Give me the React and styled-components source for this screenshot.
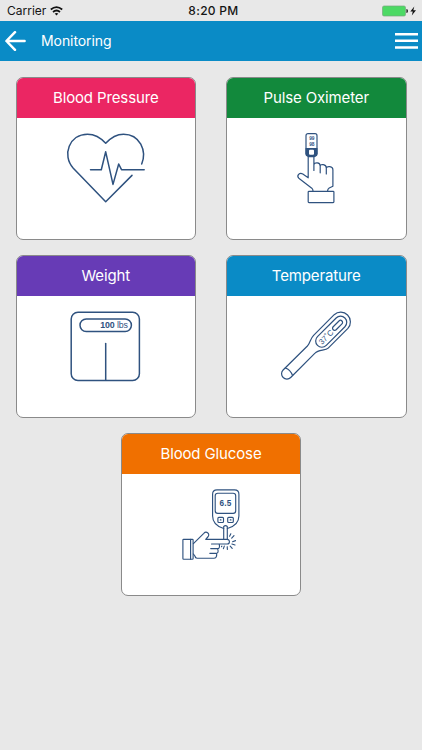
import React from "react";
import styled, { createGlobalStyle } from "styled-components";

const GlobalStyle = createGlobalStyle`
  * { box-sizing: border-box; }
  body { margin: 0; background: #e8e8e8; }
`;

const Screen = styled.div`
  width: 422px;
  height: 750px;
  overflow: hidden;
  background: #e8e8e8;
  font-family: Inter, "Liberation Sans", sans-serif;
`;

const StatusBar = styled.header`
  display: grid;
  grid-template-columns: 1fr auto 1fr;
  align-items: center;
  height: 21px;
  padding: 1px 4px 0 7px;
  color: #151515;
  font-size: 12px;
  line-height: 20px;
`;

const Carrier = styled.div`
  display: flex;
  align-items: center;
  gap: 4px;
`;

const Clock = styled.time`
  font-weight: 500;
  letter-spacing: 0.3px;
  padding-left: 2px;
`;

const Power = styled.div`
  display: flex;
  align-items: center;
  justify-content: flex-end;
`;

const NavBar = styled.nav`
  display: flex;
  align-items: center;
  height: 40px;
  padding: 0 4px 0 5px;
  background: #0a8bc6;
  color: #fff;
`;

const IconButton = styled.button`
  display: flex;
  padding: 0;
  border: 0;
  background: none;
  color: inherit;
`;

const PageTitle = styled.h1`
  flex: 1;
  margin: 0 0 0 15px;
  font-size: 14px;
  font-weight: 400;
  line-height: 20px;
  letter-spacing: -0.08px;
`;

const CardGrid = styled.main`
  display: flex;
  flex-wrap: wrap;
  justify-content: center;
  gap: 15px 30px;
  padding-top: 16px;
`;

const Card = styled.section`
  display: flex;
  flex-direction: column;
  align-items: center;
  width: 180.5px;
  height: 163px;
  overflow: hidden;
  border: 1px solid #8a8a8a;
  border-radius: 7px;
  background: #fff;
`;

const CardTitle = styled.h2`
  width: 100%;
  height: 40px;
  margin: 0 0 15px;
  background: ${(p) => p.$color};
  color: #fff;
  font-size: 15px;
  font-weight: 400;
  line-height: 40px;
  letter-spacing: -0.13px;
  text-align: center;
`;

const Drawing = styled.svg`
  display: block;
  flex: none;
  width: 80px;
  height: 72px;
  overflow: visible;
  fill: none;
  stroke: #2f527f;
  stroke-width: ${(p) => p.$line || 1.2};
  stroke-linecap: round;
  stroke-linejoin: round;

  text {
    fill: #2f527f;
    stroke: none;
    font-family: "Liberation Sans", sans-serif;
  }
`;

const Heart = () => (
  <Drawing viewBox="0 0 80 72" $line={1.5}>
    <path d="M75.7 31C81 18 74 1.2 57.5 1.2C49.5 1.2 44.5 5 39.7 10.3C35 5 29.5 1.2 21.5 1.2C3.5 1.2-4.5 22 7.3 35.2L39.7 68.8L66 42.4" />
    <path d="M24.5 36.7H35.3L39.7 18.8L47 51.4L52.7 31L55.5 36.7H78.2" />
  </Drawing>
);

const Oximeter = () => (
  <Drawing viewBox="0 0 80 72" $line={1.2}>
    <rect x="30" y=".7" width="11" height="22" rx="2" />
    <path d="M29.5 15H41.5V20.5Q40.5 24.2 37.8 24.3H33.2Q30.5 24.2 29.5 20.5Z" fill="#2f527f" stroke="none" />
    <rect x="33" y="16.8" width="5" height="5" rx="1" fill="#fff" stroke="none" />
    <text x="35.8" y="7.2" fontSize="4.8" fontWeight="700" textAnchor="middle">99</text>
    <text x="35.8" y="12.6" fontSize="4.8" fontWeight="700" textAnchor="middle">98</text>
    <path d="M32.2 24V44.8L26.8 41C23.5 39.2 20.3 42.6 22.8 45.2L35.8 55.2Q37 56.4 37 58M37.9 24V37.5M37.9 31.5C38.5 29.4 44.2 28.8 44.2 33V39.8M44.2 33C44.5 30.8 50.3 30.8 50.3 35V41M50.3 35C51 33 56.9 33 56.9 36.7V53.3L53.2 55Q51.6 56 51.6 58" />
    <rect x="32.2" y="58.3" width="25.7" height="11.3" rx=".8" />
  </Drawing>
);

const Scale = () => (
  <Drawing viewBox="0 0 80 72" $line={1.5}>
    <rect x="5.2" y="1.2" width="68.2" height="68.3" rx="6.8" />
    <rect x="14" y="8" width="51.4" height="12.5" rx="6.25" />
    <path d="M39.7 32.5V69" />
    <text x="34.3" y="17.4" fontSize="8.8" textLength="27.6">
      <tspan fontWeight="700">100</tspan> lbs
    </text>
  </Drawing>
);

const Thermometer = () => (
  <Drawing viewBox="-.4 0 80 72" $line={1.2}>
    <path d="M57.8 3.7A9.7 9.7 0 0 1 71.5 17.4L51.8 37.1C49 39.8 42 38.5 38.6 42.2L14.3 66.5A5.3 5.3 0 0 1 6.7 59L31 35C34.2 31.6 33.5 28 37.2 24.3Z" />
    <path d="M9 57Q13.8 58.5 16.2 64.5" />
    <g transform="translate(54.8 20.7) rotate(-45)">
      <rect x="-19.4" y="-6.2" width="38.8" height="12.4" rx="6.2" />
      <rect x="2.8" y="-2.1" width="12.4" height="4.2" rx="2.1" />
      <text x="-16" y="2.8" fontSize="7.8" textLength="17">37˚C</text>
    </g>
  </Drawing>
);

const GlucoseMeter = () => (
  <Drawing viewBox="0 0 80 72" $line={1.15}>
    <path d="M52.7 39.5C46 37.5 41.6 33 41.6 27V5.2Q41.6 .9 46 .9H63.5Q67.9 .9 67.9 5.2V27C67.9 33 63.5 37.5 56.4 39.5" />
    <rect x="44.2" y="4.2" width="20.5" height="20.2" rx="2.6" />
    <text x="54.4" y="16.7" fontSize="8.2" fontWeight="700" textAnchor="middle" textLength="12">6.5</text>
    <rect x="46.9" y="28.3" width="5.6" height="5.2" rx="1" />
    <rect x="56.7" y="28.3" width="5.6" height="5.2" rx="1" />
    <path d="M49.3 30.9H50M59.2 30.9H60" />
    <path d="M52.7 50.3V37.5Q54.5 35.8 56.3 37.5V50.3" />
    <rect x="11.9" y="50.4" width="10.2" height="19.8" rx=".7" />
    <path d="M19.6 50.4V70.2M22.4 54.6L32.8 44.3C35.4 41.6 39.7 45 36.8 48L34.7 50.3H56.2C59.2 50.3 59.1 55 56.2 55H40.5M48.2 55C49.2 58.8 47.8 59.6 46.6 59.6H39.7M46.6 59.6C48 63.6 46.4 64.3 44.9 64.3H38.8M45.7 64.3C46 68.3 44.7 69.2 42.8 69.2H26Q24.4 69.2 23.9 67L22.4 65" />
    <path d="M58.6 47.2L59.8 44.8M60.7 49.2L63 46.7M61.6 52.7L64.5 51.6M60.9 55L64 56M59.2 57.2L61.2 59.3M56.2 57.7L56.4 60.4M53.3 57.1L52.4 59.6M50.9 57.2L50.5 57.7" />
  </Drawing>
);

const cards = [
  { title: "Blood Pressure", color: "#eb2663", Icon: Heart },
  { title: "Pulse Oximeter", color: "#12893c", Icon: Oximeter },
  { title: "Weight", color: "#673bb6", Icon: Scale },
  { title: "Temperature", color: "#0a8bc6", Icon: Thermometer },
  { title: "Blood Glucose", color: "#f07000", Icon: GlucoseMeter },
];

export default function App() {
  return (
    <Screen>
      <GlobalStyle />
      <StatusBar>
        <Carrier>
          Carrier
          <svg width="13" height="10" viewBox="0 0 13 10" fill="none" stroke="#111" strokeWidth="1.7">
            <path d="M.8 3.5Q6.5-1.4 12.2 3.5M3 6Q6.5 3 10 6" />
            <path d="M4.7 7.6Q6.5 6.2 8.3 7.6L6.5 9.5Z" fill="#111" stroke="none" />
          </svg>
        </Carrier>
        <Clock>8:20 PM</Clock>
        <Power>
          <svg width="36" height="12" viewBox="0 0 36 12">
            <rect x=".5" y="1" width="23" height="10" rx="1.5" fill="#4cd964" stroke="#75a77d" strokeWidth=".7" />
            <path d="M24.4 4Q26 4.2 26 6T24.4 8Z" fill="#222" />
            <path d="M32.3 1.5L28.3 6.6H30.8L29.8 10.5L34 5.2H31.3Z" fill="#111" />
          </svg>
        </Power>
      </StatusBar>
      <NavBar>
        <IconButton aria-label="Back">
          <svg width="21" height="20" viewBox="0 0 21 20" fill="none" stroke="currentColor" strokeWidth="2.5" strokeLinecap="round" strokeLinejoin="round">
            <path d="M19.6 10H1.6M10 1.2L1.4 10L10 18.8" />
          </svg>
        </IconButton>
        <PageTitle>Monitoring</PageTitle>
        <IconButton aria-label="Menu">
          <svg width="23" height="16" viewBox="0 0 23 16" fill="currentColor">
            <path d="M0 0H23V2.5H0ZM0 6.6H23V9.1H0ZM0 13.2H23V15.7H0Z" />
          </svg>
        </IconButton>
      </NavBar>
      <CardGrid>
        {cards.map(({ title, color, Icon }) => (
          <Card key={title}>
            <CardTitle $color={color}>{title}</CardTitle>
            <Icon />
          </Card>
        ))}
      </CardGrid>
    </Screen>
  );
}
